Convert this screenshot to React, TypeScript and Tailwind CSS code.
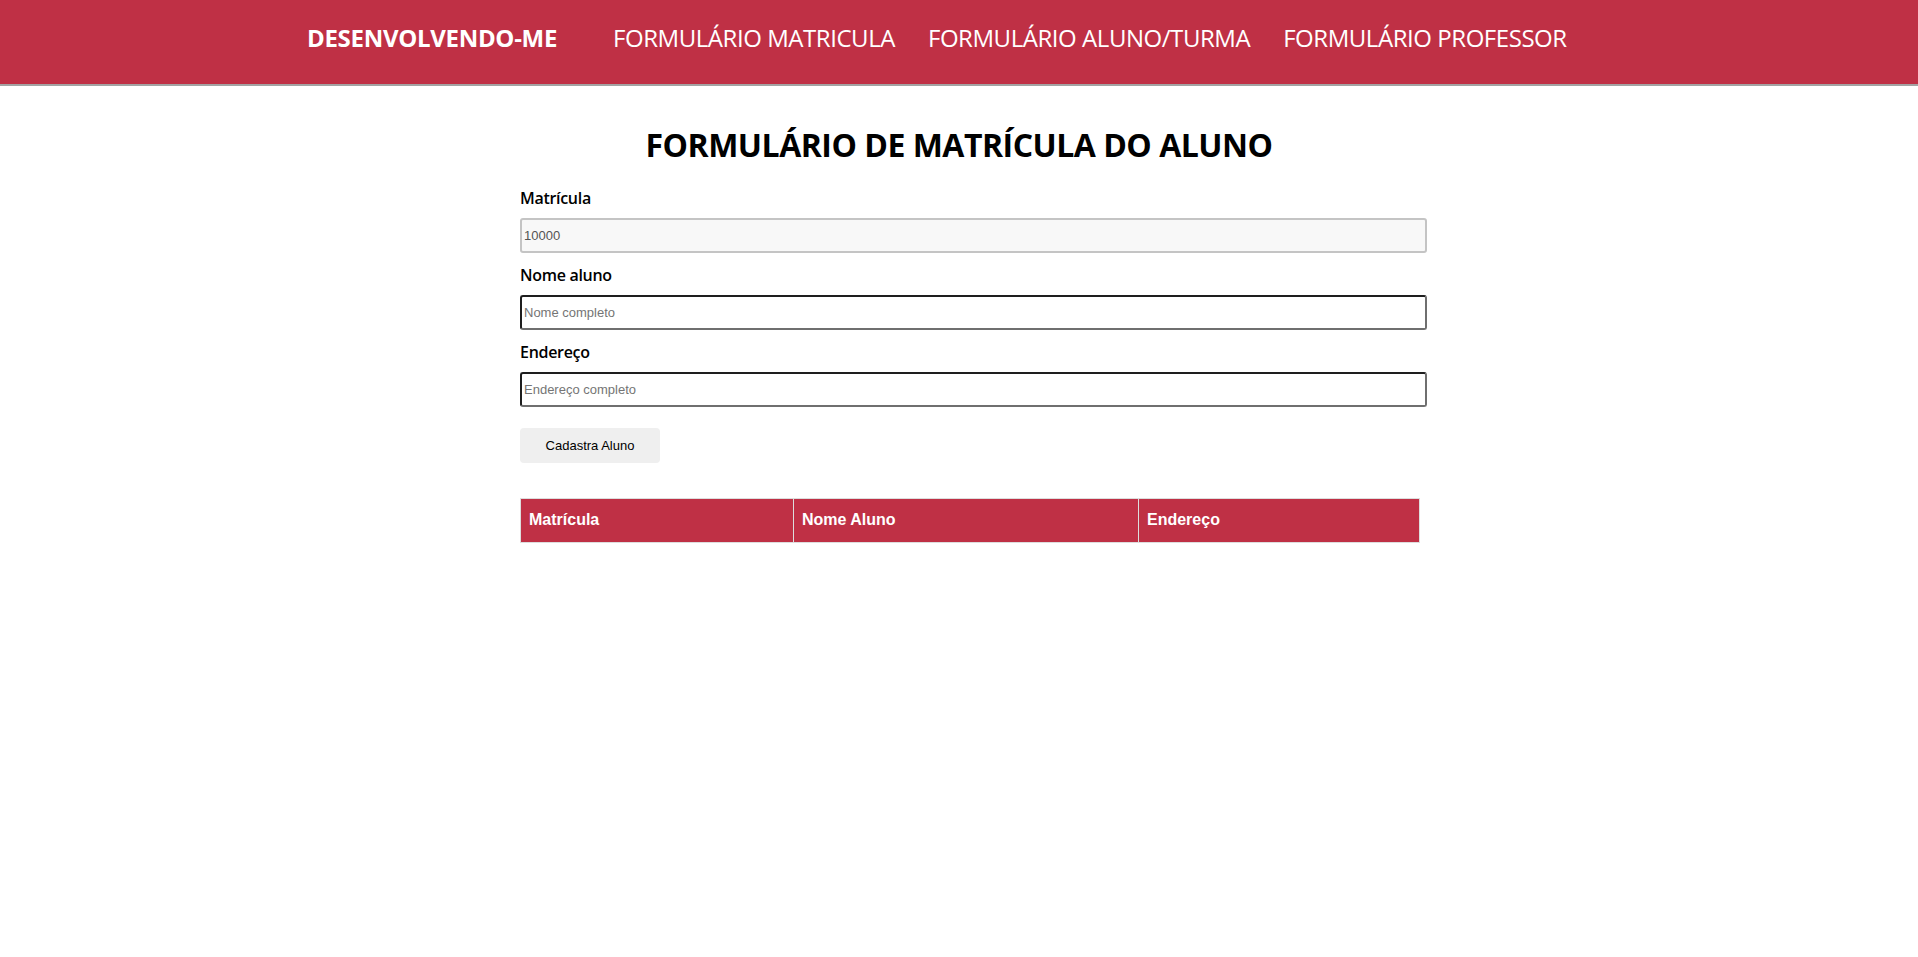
import React from "react";

const navLinks = [
  "FORMULÁRIO MATRICULA",
  "FORMULÁRIO ALUNO/TURMA",
  "FORMULÁRIO PROFESSOR",
];

const Header: React.FC = () => {
  return (
    <header className="h-[86px] bg-[#bf3045] border-b-2 border-[#a3a3a3] flex items-center pb-[8px] pl-[307px] font-['Open_Sans',sans-serif] text-white">
      <a href="#" className="text-[24px] leading-[32px] font-bold tracking-[-0.3px] mr-[56px]">
        DESENVOLVENDO-ME
      </a>
      <nav className="flex gap-[33px]">
        {navLinks.map((link) => (
          <a key={link} href="#" className="text-[24px] leading-[32px] tracking-[-0.45px]">
            {link}
          </a>
        ))}
      </nav>
    </header>
  );
};

const App: React.FC = () => {
  return (
    <div className="min-h-[957px] bg-white">
      <Header />
      <main className="mx-auto w-[878px] pt-[39px] font-['Open_Sans',sans-serif]">
        <h1 className="text-center text-[32px] leading-[40px] font-bold tracking-[-0.5px] text-black">
          FORMULÁRIO DE MATRÍCULA DO ALUNO
        </h1>

        <form className="mt-[23px]" onSubmit={(e) => e.preventDefault()}>
          <label className="block text-[16px] leading-[20px] font-semibold tracking-[-0.3px] text-black">
            Matrícula
          </label>
          <input
            readOnly
            value="10000"
            className="mt-[10px] block w-[907px] h-[35px] px-[2px] rounded-[3px] border-2 border-[#c4c4c4] bg-[#f8f8f8] text-[13px] text-[#545454] font-['Liberation_Sans',sans-serif] outline-none"
          />

          <label className="mt-[12px] block text-[16px] leading-[20px] font-semibold tracking-[-0.3px] text-black">
            Nome aluno
          </label>
          <input
            placeholder="Nome completo"
            className="mt-[10px] block w-[907px] h-[35px] px-[2px] rounded-[3px] border-2 border-t-[#1e1e1e] border-l-[#1e1e1e] border-r-[#6f6f6f] border-b-[#6f6f6f] bg-white text-[13px] font-['Liberation_Sans',sans-serif] placeholder:text-[#757575] outline-none"
          />

          <label className="mt-[12px] block text-[16px] leading-[20px] font-semibold tracking-[-0.3px] text-black">
            Endereço
          </label>
          <input
            placeholder="Endereço completo"
            className="mt-[10px] block w-[907px] h-[35px] px-[2px] rounded-[3px] border-2 border-t-[#1e1e1e] border-l-[#1e1e1e] border-r-[#6f6f6f] border-b-[#6f6f6f] bg-white text-[13px] font-['Liberation_Sans',sans-serif] placeholder:text-[#757575] outline-none"
          />

          <button
            type="submit"
            className="mt-[21px] block w-[140px] h-[35px] rounded-[4px] bg-[#efefef] text-[13px] text-black font-['Liberation_Sans',sans-serif]"
          >
            Cadastra Aluno
          </button>
        </form>

        <table className="mt-[35px] w-[899px] table-fixed border-collapse font-['Liberation_Sans',sans-serif]">
          <thead>
            <tr className="bg-[#bf3045] text-white text-left">
              <th className="w-[273px] h-[44px] px-[8px] pb-[2px] border border-[#dddddd] text-[16px] font-bold">
                Matrícula
              </th>
              <th className="w-[345px] h-[44px] px-[8px] pb-[2px] border border-[#dddddd] text-[16px] font-bold">
                Nome Aluno
              </th>
              <th className="w-[281px] h-[44px] px-[8px] pb-[2px] border border-[#dddddd] text-[16px] font-bold">
                Endereço
              </th>
            </tr>
          </thead>
          <tbody></tbody>
        </table>
      </main>
    </div>
  );
};

export default App;
